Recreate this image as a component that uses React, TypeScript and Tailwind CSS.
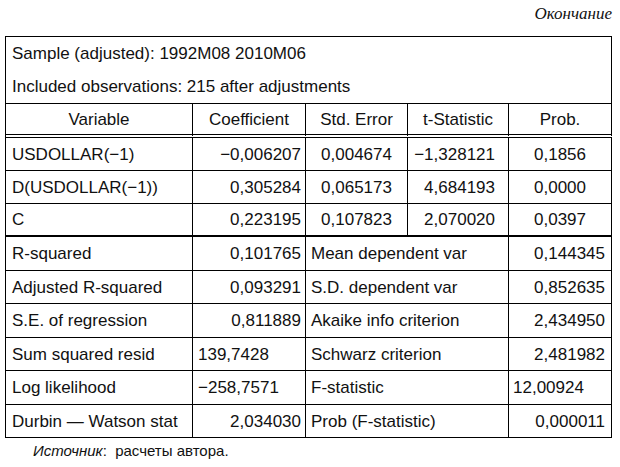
import React from 'react';

const coefRows = [
  ['USDOLLAR(−1)', '−0,006207', '0,004674', '−1,328121', '0,1856'],
  ['D(USDOLLAR(−1))', '0,305284', '0,065173', '4,684193', '0,0000'],
  ['C', '0,223195', '0,107823', '2,070020', '0,0397'],
];

type StatRow = {
  label: string;
  value: string;
  valueLeft?: boolean;
  label2: string;
  value2: string;
  value2Left?: boolean;
  h: string;
};

const statRows: StatRow[] = [
  { label: 'R-squared', value: '0,101765', label2: 'Mean dependent var', value2: '0,144345', h: 'h-[34px]' },
  { label: 'Adjusted R-squared', value: '0,093291', label2: 'S.D. dependent var', value2: '0,852635', h: 'h-[33px]' },
  { label: 'S.E. of regression', value: '0,811889', label2: 'Akaike info criterion', value2: '2,434950', h: 'h-[34px]' },
  { label: 'Sum squared resid', value: '139,7428', valueLeft: true, label2: 'Schwarz criterion', value2: '2,481982', h: 'h-[33px]' },
  { label: 'Log likelihood', value: '−258,7571', valueLeft: true, label2: 'F-statistic', value2: '12,00924', value2Left: true, h: 'h-[34px]' },
  { label: 'Durbin — Watson stat', value: '2,034030', label2: 'Prob (F-statistic)', value2: '0,000011', h: 'h-[33px]' },
];

const cols = 'grid grid-cols-[187px_113px_102px_101px_103px]';
const statCols = 'grid grid-cols-[187px_113px_203px_103px]';

export default function App() {
  return (
    <div className="w-[620px] h-[467px] bg-white text-[#111] font-['Liberation_Sans',Arial,sans-serif] text-[17px] leading-none">
      <div className="h-[36px] pt-[5px] pr-[8px] text-right font-['Liberation_Serif','Times_New_Roman',serif] italic text-[17px]">
        Окончание
      </div>

      <div className="ml-[5px] w-[607px] border-l border-t border-black">
        <div className="h-[33px] flex items-center pl-[6px] border-r border-black">
          Sample (adjusted): 1992M08 2010M06
        </div>
        <div className="h-[34px] flex items-center pl-[6px] border-r border-b border-black">
          Included observations: 215 after adjustments
        </div>

        <div className={`${cols} h-[34px]`}>
          {['Variable', 'Coefficient', 'Std. Error', 't-Statistic', 'Prob.'].map((t) => (
            <div key={t} className="flex items-center justify-center pt-[1px] border-r border-b-4 border-double border-black">
              {t}
            </div>
          ))}
        </div>

        {coefRows.map((r, i) => (
          <div key={r[0]} className={`${cols} h-[33px]`}>
            {r.map((c, j) => (
              <div
                key={j}
                className={[
                  'flex items-center border-r border-black',
                  i === 2 ? 'border-b-2' : 'border-b',
                  j === 0 ? 'pl-[6px]' : '',
                  j === 1 ? 'justify-end pr-[4px]' : '',
                  j === 2 || j === 4 ? 'justify-center' : '',
                  j === 3 ? 'justify-end pr-[13px]' : '',
                ].join(' ')}
              >
                {c}
              </div>
            ))}
          </div>
        ))}

        {statRows.map((s) => (
          <div key={s.label} className={`${statCols} ${s.h}`}>
            <div className="flex items-center pl-[6px] border-r border-b border-black">{s.label}</div>
            <div className={`flex items-center border-r border-b border-black ${s.valueLeft ? 'pl-[5px]' : 'justify-end pr-[4px]'}`}>
              {s.value}
            </div>
            <div className="flex items-center pl-[5px] border-r border-b border-black">{s.label2}</div>
            <div className={`flex items-center border-r border-b border-black ${s.value2Left ? 'pl-[4px]' : 'justify-end pr-[6px]'}`}>
              {s.value2}
            </div>
          </div>
        ))}
      </div>

      <div className="pt-[5px] pl-[33px] text-[15px]">
        <span className="italic">Источник</span>:&nbsp; расчеты автора.
      </div>
    </div>
  );
}
